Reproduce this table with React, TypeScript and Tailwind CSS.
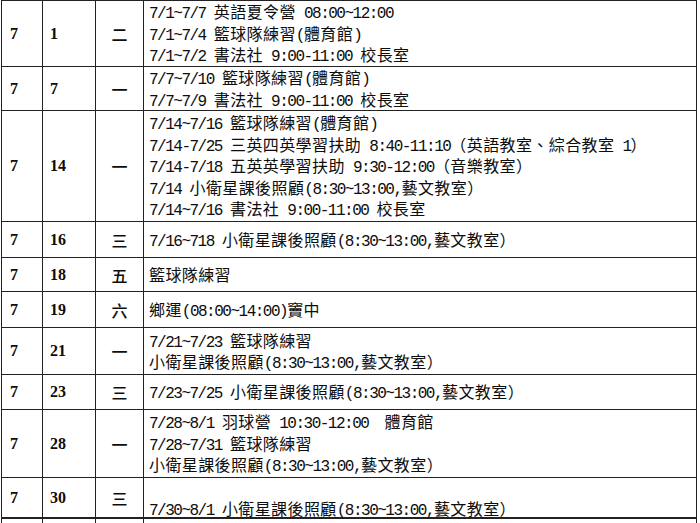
import React from 'react';

type Row = {
  m: string;
  d: string;
  w: string;
  h: string;
  lead?: string;
  lines: string[];
};

const rows: Row[] = [
  {
    m: '7', d: '1', w: '二', h: 'h-[66px]',
    lines: ['7/1~7/7 英語夏令營 08:00~12:00', '7/1~7/4 籃球隊練習(體育館)', '7/1~7/2 書法社 9:00-11:00 校長室'],
  },
  {
    m: '7', d: '7', w: '一', h: 'h-[44px]',
    lines: ['7/7~7/10 籃球隊練習(體育館)', '7/7~7/9 書法社 9:00-11:00 校長室'],
  },
  {
    m: '7', d: '14', w: '一', h: 'h-[111px]',
    lines: [
      '7/14~7/16 籃球隊練習(體育館)',
      '7/14-7/25 三英四英學習扶助 8:40-11:10（英語教室、綜合教室 1）',
      '7/14-7/18 五英英學習扶助 9:30-12:00（音樂教室）',
      '7/14 小衛星課後照顧(8:30~13:00,藝文教室）',
      '7/14~7/16 書法社 9:00-11:00 校長室',
    ],
  },
  { m: '7', d: '16', w: '三', h: 'h-[36px]', lines: ['7/16~718 小衛星課後照顧(8:30~13:00,藝文教室）'] },
  { m: '7', d: '18', w: '五', h: 'h-[34px]', lines: ['籃球隊練習'] },
  { m: '7', d: '19', w: '六', h: 'h-[36px]', lines: ['鄉運(08:00~14:00)竇中'] },
  {
    m: '7', d: '21', w: '一', h: 'h-[47px]',
    lines: ['7/21~7/23 籃球隊練習', '小衛星課後照顧(8:30~13:00,藝文教室）'],
  },
  { m: '7', d: '23', w: '三', h: 'h-[35px]', lines: ['7/23~7/25 小衛星課後照顧(8:30~13:00,藝文教室）'] },
  {
    m: '7', d: '28', w: '一', h: 'h-[68px]',
    lines: ['7/28~8/1 羽球營 10:30-12:00  體育館', '7/28~7/31 籃球隊練習', '小衛星課後照顧(8:30~13:00,藝文教室）'],
  },
  {
    m: '7', d: '30', w: '三', h: 'h-[41px]', lead: 'h-[20px]',
    lines: ['', '7/30~8/1 小衛星課後照顧(8:30~13:00,藝文教室）'],
  },
];

// split a line into CJK / latin runs so latin gets half-width mono spacing
function Mixed({ text }: { text: string }) {
  if (!text) return null;
  const parts = text.split(/([\u2E80-\u9FFF\u3000-\u303F\uFF00-\uFFEF]+)/);
  return (
    <>
      {parts.map((p, i) =>
        p === '' ? null : i % 2 === 1 ? (
          <span key={i} className="font-['Noto_Sans_CJK_TC',sans-serif] tracking-[0.4px]">{p}</span>
        ) : (
          <span key={i} className="font-['Liberation_Mono',monospace] tracking-[-1.5px]">{p}</span>
        )
      )}
    </>
  );
}

const cell = 'border-r border-b border-[#222] flex items-center';

export default function App() {
  return (
    <div className="w-[700px] h-[523px] overflow-hidden bg-white text-[#0d0d0d] text-[16px]">
      <div className="ml-[1px] w-[696px] border-l border-t border-[#222]">
        {rows.map((r, i) => (
          <div
            key={i}
            className={`grid grid-cols-[41px_53px_48px_553px] grid-rows-[100%] ${r.h} ${i === rows.length - 1 ? '[&>div]:border-b-2' : ''}`}
          >
            <div className={`${cell} pl-[8px] font-['Liberation_Serif',serif] font-bold`}>{r.m}</div>
            <div className={`${cell} pl-[7px] font-['Liberation_Serif',serif] font-bold`}>{r.d}</div>
            <div className={`${cell} justify-center font-['Noto_Sans_CJK_TC',sans-serif] font-medium`}>{r.w}</div>
            <div className={`${cell} pl-[5px]`}>
              <div className="flex flex-col">
                {r.lines.map((l, j) => (
                  <div
                    key={j}
                    className={`flex items-baseline whitespace-pre leading-[20px] ${r.lead ?? 'h-[21.5px]'}`}
                  >
                    <Mixed text={l} />
                  </div>
                ))}
              </div>
            </div>
          </div>
        ))}
        <div className="grid grid-cols-[41px_53px_48px_553px] h-[12px]">
          <div className="border-r border-[#222]" />
          <div className="border-r border-[#222]" />
          <div className="border-r border-[#222]" />
          <div className="border-r border-[#222]" />
        </div>
      </div>
    </div>
  );
}
